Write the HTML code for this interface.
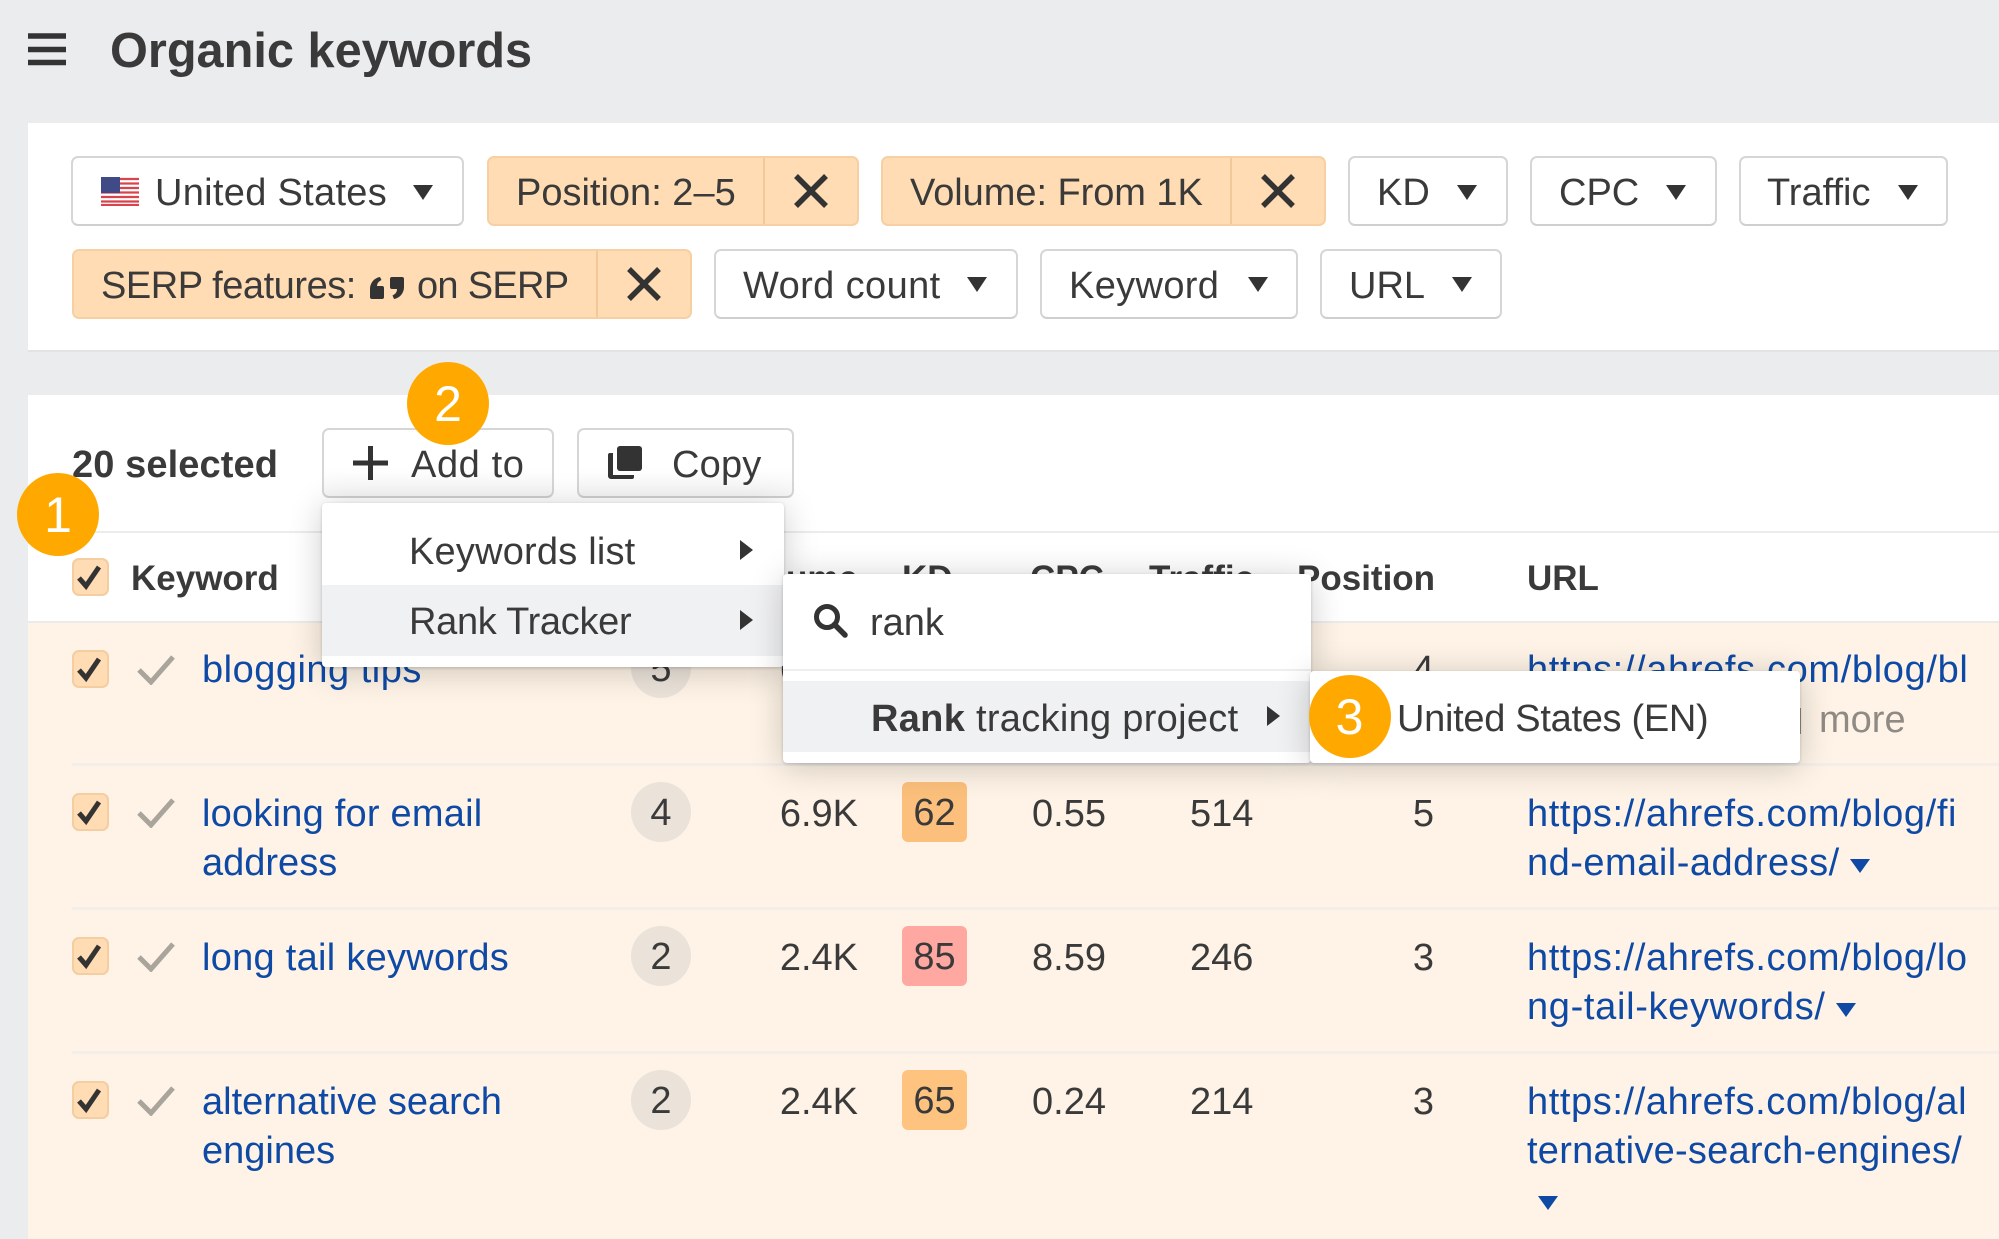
<!DOCTYPE html>
<html lang="en"><head><meta charset="utf-8"><title>Organic keywords</title>
<style>
html,body{margin:0;padding:0;background:#ebecee}
#p{position:relative;width:1999px;height:1239px;overflow:hidden;background:#ebecee;font-family:"Liberation Sans",Arial,sans-serif;font-size:38px;line-height:50px;color:#3a3a3a}
#p div,#p svg,#p span.a,#p b.a{position:absolute}
.t{white-space:nowrap}
.r{white-space:nowrap;text-align:right}
.l{color:#0e4aa5;white-space:nowrap}
.h{white-space:nowrap;font-weight:bold;font-size:35px}
.btn{box-sizing:border-box;height:70px;background:#fff;border:2px solid #d6d6d6;border-bottom-color:#cfcfcf;border-radius:7px}
.or{box-sizing:border-box;height:70px;background:#ffdcb3;border:2px solid #f6d0a3;border-radius:7px}
.dv{width:2px;background:#f2c898}
.dn{width:0;height:0;border-left:10.5px solid transparent;border-right:10.5px solid transparent;border-top:15px solid #333}
.bl{width:0;height:0;border-left:10px solid transparent;border-right:10px solid transparent;border-top:14px solid #0e4aa5}
.rt{width:0;height:0;border-top:10.5px solid transparent;border-bottom:10.5px solid transparent;border-left:13px solid #333}
.cb{box-sizing:border-box;width:37px;height:38px;background:#ffdcb3;border:2px solid #f4cda0;border-radius:7px}
.cir{width:60px;height:60px;border-radius:30px;background:#ebe3d9;text-align:center;line-height:62px}
.kd{width:65px;height:60px;border-radius:6px;text-align:center;line-height:62px}
.sep{left:72px;width:1927px;height:3px;background:#f3eeea}
.num{width:82px;height:83px;border-radius:50%;background:#ffa900;color:#fff;text-align:center;font-size:50px;line-height:85px}
.menu{background:#fff;border-radius:4px;box-shadow:0 4px 34px rgba(0,0,0,.2),0 1px 3px rgba(0,0,0,.18)}
</style></head><body><div id="p">

<svg style="left:28px;top:33px" width="38" height="33"><path d="M0 3h38M0 16.500h38M0 29.500h38" stroke="#333" stroke-width="5.500"/></svg>
<div class="t" style="left:110px;top:21px;font-size:48.700px;line-height:60px;font-weight:bold;color:#3a3a3a">Organic keywords</div>

<div style="left:28px;top:123px;width:1971px;height:229px;background:#fff;border-bottom:2px solid #e2e3e5;box-sizing:border-box"></div>

<!-- row 1 filters -->
<div class="btn" style="left:71px;top:156px;width:393px"></div>
<svg style="left:101px;top:177px" width="38" height="29" viewBox="0 0 38 29"><rect width="38" height="29" fill="#fff"/><path d="M0 2h38M0 6.500h38M0 11h38M0 15.500h38M0 20h38M0 24.500h38M0 28h38" stroke="#d9434e" stroke-width="2.300"/><rect width="19" height="16" fill="#3f4a86"/></svg>
<div class="t" style="left:155px;top:168px;letter-spacing:.3px">United States</div>
<div class="dn" style="left:413px;top:185px"></div>

<div class="or" style="left:487px;top:156px;width:372px"></div>
<div class="dv" style="left:763px;top:158px;height:66px"></div>
<div class="t" style="left:516px;top:168px">Position: 2–5</div>
<svg style="left:793px;top:174px" width="36" height="34"><path d="M3 2L33 32M33 2L3 32" stroke="#333" stroke-width="5.500"/></svg>

<div class="or" style="left:881px;top:156px;width:445px"></div>
<div class="dv" style="left:1230px;top:158px;height:66px"></div>
<div class="t" style="left:910px;top:168px;letter-spacing:-.05px">Volume: From 1K</div>
<svg style="left:1260px;top:174px" width="36" height="34"><path d="M3 2L33 32M33 2L3 32" stroke="#333" stroke-width="5.500"/></svg>

<div class="btn" style="left:1348px;top:156px;width:160px"></div>
<div class="t" style="left:1377px;top:168px">KD</div>
<div class="dn" style="left:1457px;top:185px"></div>

<div class="btn" style="left:1530px;top:156px;width:187px"></div>
<div class="t" style="left:1559px;top:168px">CPC</div>
<div class="dn" style="left:1666px;top:185px"></div>

<div class="btn" style="left:1739px;top:156px;width:209px"></div>
<div class="t" style="left:1767px;top:168px">Traffic</div>
<div class="dn" style="left:1898px;top:185px"></div>

<!-- row 2 filters -->
<div class="or" style="left:72px;top:249px;width:620px"></div>
<div class="dv" style="left:596px;top:251px;height:66px"></div>
<div class="t" style="left:101px;top:261px;letter-spacing:-.45px">SERP features:</div>
<svg style="left:370px;top:277px" width="34" height="22" viewBox="0 0 34 22"><path d="M2 22a2 2 0 0 1-2-2V12C0 6 4 1 10 0l1.500 3C8.500 4.500 7 6.500 7 9h5a2 2 0 0 1 2 2v9a2 2 0 0 1-2 2zM22 0a2 2 0 0 0-2 2v8a2 2 0 0 0 2 2h5c0 3-1.500 5-4.500 6.500L24 22c6-1 10-6 10-12V2a2 2 0 0 0-2-2z" fill="#333"/></svg>
<div class="t" style="left:417px;top:261px;letter-spacing:-.7px">on SERP</div>
<svg style="left:626px;top:267px" width="36" height="34"><path d="M3 2L33 32M33 2L3 32" stroke="#333" stroke-width="5.500"/></svg>

<div class="btn" style="left:714px;top:249px;width:304px"></div>
<div class="t" style="left:743px;top:261px;letter-spacing:.4px">Word count</div>
<div class="dn" style="left:967px;top:277px"></div>

<div class="btn" style="left:1040px;top:249px;width:258px"></div>
<div class="t" style="left:1069px;top:261px;letter-spacing:.35px">Keyword</div>
<div class="dn" style="left:1248px;top:277px"></div>

<div class="btn" style="left:1320px;top:249px;width:182px"></div>
<div class="t" style="left:1349px;top:261px">URL</div>
<div class="dn" style="left:1452px;top:277px"></div>

<!-- table panel -->
<div style="left:28px;top:395px;width:1971px;height:844px;background:#fff"></div>
<div class="t" style="left:72px;top:440px;font-weight:bold;letter-spacing:.1px">20 selected</div>

<div class="btn" style="left:322px;top:428px;width:232px;background:linear-gradient(#fff 55%,#f6f6f6)"></div>
<svg style="left:353px;top:446px" width="35" height="34"><path d="M17.500 0v34M0 17h35" stroke="#333" stroke-width="5"/></svg>
<div class="t" style="left:411px;top:440px;letter-spacing:.6px">Add to</div>

<div class="btn" style="left:577px;top:428px;width:217px;background:linear-gradient(#fff 55%,#f6f6f6)"></div>
<svg style="left:608px;top:446px" width="34" height="33" viewBox="0 0 34 33"><rect x="9" y="0" width="25" height="25" rx="3" fill="#333"/><path d="M0 9a2 2 0 0 1 2-2h3v22h21v2a2 2 0 0 1-2 2H3a3 3 0 0 1-3-3z" fill="#333"/></svg>
<div class="t" style="left:672px;top:440px;letter-spacing:.2px">Copy</div>

<div style="left:28px;top:531px;width:1971px;height:2px;background:#ececec"></div>

<!-- header -->
<div class="cb" style="left:72px;top:558px"></div>
<svg style="left:72px;top:558px" width="37" height="38"><path d="M7 20l7 8L27 9" fill="none" stroke="#333" stroke-width="5"/></svg>
<div class="h" style="left:131px;top:554px">Keyword</div>
<div class="h" style="right:1141px;top:554px;text-align:right">Volume</div>
<div class="h" style="left:902px;top:554px">KD</div>
<div class="h" style="left:1030px;top:554px">CPC</div>
<div class="h" style="left:1149px;top:554px">Traffic</div>
<div class="h" style="left:1297px;top:554px">Position</div>
<div class="h" style="left:1527px;top:554px">URL</div>

<!-- rows background -->
<div style="left:28px;top:621px;width:1971px;height:618px;background:#fef3e6;border-top:2px solid #ecebea;box-sizing:border-box"></div>
<div class="sep" style="top:763px"></div>
<div class="sep" style="top:907px"></div>
<div class="sep" style="top:1051px"></div>

<!-- row 1 -->
<div class="cb" style="left:72px;top:650px"></div>
<svg style="left:72px;top:650px" width="37" height="38"><path d="M7 20l7 8L27 9" fill="none" stroke="#333" stroke-width="5"/></svg>
<svg style="left:137px;top:655px" width="38" height="30"><path d="M2 15L14 27 36 2" fill="none" stroke="#a9a49c" stroke-width="5"/></svg>
<div class="l" style="left:202px;top:645px;letter-spacing:.5px">blogging tips</div>
<div class="cir" style="left:631px;top:638px">5</div>
<div class="r" style="right:1141px;top:645px">6.7K</div>
<div class="r" style="right:565px;top:645px">4</div>
<div class="l" style="left:1527px;top:645px;letter-spacing:.65px">https://ahrefs.com/blog/bl</div>
<div style="left:1799px;top:708px;width:2px;height:26px;background:#8f8a83"></div>
<div class="t" style="left:1819px;top:695px;color:#8f8a83">more</div>

<!-- row 2 -->
<div class="cb" style="left:72px;top:793px"></div>
<svg style="left:72px;top:793px" width="37" height="38"><path d="M7 20l7 8L27 9" fill="none" stroke="#333" stroke-width="5"/></svg>
<svg style="left:137px;top:798px" width="38" height="30"><path d="M2 15L14 27 36 2" fill="none" stroke="#a9a49c" stroke-width="5"/></svg>
<div class="l" style="left:202px;top:789px;letter-spacing:.22px">looking for email</div>
<div class="l" style="left:202px;top:838px">address</div>
<div class="cir" style="left:631px;top:782px">4</div>
<div class="r" style="right:1141px;top:789px">6.9K</div>
<div class="kd" style="left:902px;top:782px;background:#fcc07c">62</div>
<div class="t" style="left:1032px;top:789px">0.55</div>
<div class="t" style="left:1190px;top:789px">514</div>
<div class="r" style="right:565px;top:789px">5</div>
<div class="l" style="left:1527px;top:789px;letter-spacing:.62px">https://ahrefs.com/blog/fi</div>
<div class="l" style="left:1527px;top:838px;letter-spacing:.5px">nd-email-address/</div>
<div class="bl" style="left:1850px;top:859px"></div>

<!-- row 3 -->
<div class="cb" style="left:72px;top:937px"></div>
<svg style="left:72px;top:937px" width="37" height="38"><path d="M7 20l7 8L27 9" fill="none" stroke="#333" stroke-width="5"/></svg>
<svg style="left:137px;top:942px" width="38" height="30"><path d="M2 15L14 27 36 2" fill="none" stroke="#a9a49c" stroke-width="5"/></svg>
<div class="l" style="left:202px;top:933px;letter-spacing:.28px">long tail keywords</div>
<div class="cir" style="left:631px;top:926px">2</div>
<div class="r" style="right:1141px;top:933px">2.4K</div>
<div class="kd" style="left:902px;top:926px;background:#ffa8a1">85</div>
<div class="t" style="left:1032px;top:933px">8.59</div>
<div class="t" style="left:1190px;top:933px">246</div>
<div class="r" style="right:565px;top:933px">3</div>
<div class="l" style="left:1527px;top:933px;letter-spacing:.62px">https://ahrefs.com/blog/lo</div>
<div class="l" style="left:1527px;top:982px;letter-spacing:.67px">ng-tail-keywords/</div>
<div class="bl" style="left:1836px;top:1003px"></div>

<!-- row 4 -->
<div class="cb" style="left:72px;top:1081px"></div>
<svg style="left:72px;top:1081px" width="37" height="38"><path d="M7 20l7 8L27 9" fill="none" stroke="#333" stroke-width="5"/></svg>
<svg style="left:137px;top:1086px" width="38" height="30"><path d="M2 15L14 27 36 2" fill="none" stroke="#a9a49c" stroke-width="5"/></svg>
<div class="l" style="left:202px;top:1077px">alternative search</div>
<div class="l" style="left:202px;top:1126px">engines</div>
<div class="cir" style="left:631px;top:1070px">2</div>
<div class="r" style="right:1141px;top:1077px">2.4K</div>
<div class="kd" style="left:902px;top:1070px;background:#ffc380">65</div>
<div class="t" style="left:1032px;top:1077px">0.24</div>
<div class="t" style="left:1190px;top:1077px">214</div>
<div class="r" style="right:565px;top:1077px">3</div>
<div class="l" style="left:1527px;top:1077px;letter-spacing:.6px">https://ahrefs.com/blog/al</div>
<div class="l" style="left:1527px;top:1126px;letter-spacing:.25px">ternative-search-engines/</div>
<div class="bl" style="left:1538px;top:1196px"></div>

<!-- menu 1 -->
<div class="menu" style="left:322px;top:503px;width:462px;height:164px"></div>
<div style="left:322px;top:585px;width:462px;height:71px;background:#f0f1f3"></div>
<div class="t" style="left:409px;top:527px;letter-spacing:.2px">Keywords list</div>
<div class="rt" style="left:740px;top:540px"></div>
<div class="t" style="left:409px;top:597px;letter-spacing:-.3px">Rank Tracker</div>
<div class="rt" style="left:740px;top:610px"></div>

<!-- menu 2 -->
<div class="menu" style="left:783px;top:574px;width:528px;height:189px"></div>
<svg style="left:812px;top:602px" width="36" height="36"><circle cx="15" cy="15" r="10.500" fill="none" stroke="#333" stroke-width="5"/><path d="M22.500 22.500L33 33" stroke="#333" stroke-width="5.500" stroke-linecap="round"/></svg>
<div class="t" style="left:870px;top:598px">rank</div>
<div style="left:783px;top:669px;width:528px;height:2px;background:#eee"></div>
<div style="left:783px;top:681px;width:528px;height:71px;background:#f0f1f3"></div>
<div class="t" style="left:871px;top:694px;letter-spacing:.3px"><b>Rank</b> tracking project</div>
<div class="rt" style="left:1267px;top:706px"></div>

<!-- menu 3 -->
<div class="menu" style="left:1310px;top:671px;width:490px;height:92px"></div>
<div class="t" style="left:1397px;top:694px;letter-spacing:-.3px">United States (EN)</div>

<!-- number badges -->
<div class="num" style="left:407px;top:362px">2</div>
<div class="num" style="left:17px;top:473px">1</div>
<div class="num" style="left:1309px;top:675px;width:82px;text-indent:-1px">3</div>

</div></body></html>
